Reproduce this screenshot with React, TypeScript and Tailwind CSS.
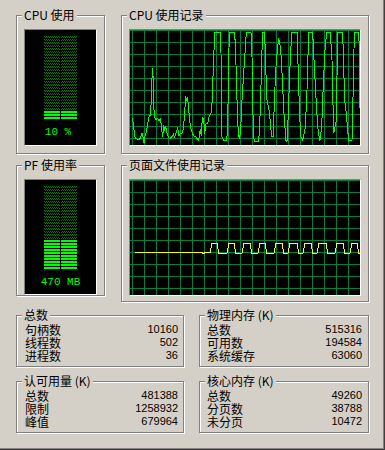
import React from 'react';

// rough trace of the cpu history, in 3x zoom coordinates of the original graph
const CPU_TRACE: [number, number][] = [
  [37, 355], [40, 372], [43, 400], [46, 415], [52, 418], [57, 420], [62, 412], [66, 400], [69, 412], [72, 428],
  [75, 408], [79, 395], [83, 372], [87, 350], [91, 345], [94, 300], [97, 205], [100, 240], [102, 330], [106, 360],
  [112, 355], [117, 362], [122, 356], [125, 390], [128, 410], [131, 375], [134, 392], [137, 378], [141, 398], [145, 412],
  [150, 416], [156, 410], [160, 402], [164, 412], [168, 398], [173, 385], [177, 408], [181, 400], [186, 400], [190, 388],
  [194, 340], [197, 288], [200, 302], [203, 292], [206, 330], [210, 370], [213, 388], [217, 400], [222, 408], [227, 410],
  [231, 415], [235, 420], [238, 410], [241, 386], [244, 408], [247, 352], [251, 355], [254, 402], [258, 372], [263, 370],
  [268, 348], [273, 340], [276, 310], [279, 230], [282, 150], [285, 97], [300, 97], [303, 160], [306, 410], [311, 420],
  [320, 420], [323, 390], [325, 240], [328, 97], [344, 97], [347, 160], [351, 300], [355, 408], [359, 415], [362, 388],
  [366, 300], [371, 220], [375, 160], [379, 97], [393, 97], [396, 170], [400, 400], [403, 425], [416, 425], [419, 380],
  [422, 290], [426, 150], [429, 97], [434, 97], [437, 200], [441, 300], [448, 335], [455, 410], [460, 410], [463, 300],
  [468, 200], [472, 150], [476, 115], [480, 135], [484, 175], [488, 260], [493, 360], [498, 422], [501, 425], [504, 360],
  [510, 200], [515, 97], [531, 97], [533, 160], [539, 350], [543, 410], [548, 420], [553, 398], [556, 380], [561, 270],
  [566, 97], [578, 97], [581, 160], [590, 330], [595, 400], [600, 422], [605, 380], [610, 250], [615, 150], [620, 97],
  [631, 97], [636, 180], [641, 400], [649, 360], [653, 97], [668, 97], [671, 200], [674, 300], [679, 340], [683, 390],
  [686, 420], [696, 420], [700, 250], [703, 97], [716, 97], [719, 175], [719, 325],
];

const cpuPoints = CPU_TRACE.map(([x, y]) => `${x / 3 - 10},${y / 3 - 30}`).join(' ');

// page file history: flat, then a trapezoid wave
const PF_TOPS: [number, number][] = [
  [82, 87], [99, 104], [114, 120], [130, 135], [146, 152], [160, 167], [175, 181], [189, 196], [207, 213], [222, 227],
];

const pfPoints = (() => {
  const pts: string[] = ['5,72.5', '72,72.5', '72,73.5', '74,73.5', '74,72.5', '79,72.5'];
  PF_TOPS.forEach(([a, b], i) => {
    const base = i === 0 ? 72.5 : 73.5;
    pts.push(`${a - 2},${base}`, `${a},63.5`, `${b},63.5`, `${b + 2},73.5`);
  });
  pts.push('230,73.5');
  return pts.join(' ');
})();

const GRID_X = Array.from({ length: 20 }, (_, i) => 2.5 + i * 12);
const GRID_Y = Array.from({ length: 10 }, (_, i) => 0.5 + i * 12);

const Group: React.FC<{ title: string; className?: string; children?: React.ReactNode }> = ({ title, className = '', children }) => (
  <div className={`flex flex-col border border-[#808080] shadow-[inset_1px_1px_0_#fff,1px_1px_0_#fff] ${className}`}>
    <span className="-mt-[7px] ml-[5px] w-fit bg-[#d4d0c8] px-[2px] text-[12px] leading-[12px] text-black">{title}</span>
    {children}
  </div>
);

const Sunken: React.FC<{ className?: string; children?: React.ReactNode }> = ({ className = '', children }) => (
  <div className={`border border-t-[#808080] border-l-[#808080] border-b-white border-r-white bg-black ${className}`}>
    {children}
  </div>
);

const Meter: React.FC<{ lit: number; id: string; label: string; labelClass?: string }> = ({ lit, id, label, labelClass = '' }) => {
  const rows = 28;
  return (
    <Sunken className="mx-[7px] mt-[8px] flex h-[117px] flex-col items-center">
      <svg width="33" height="84" className="mt-[6px]">
        <defs>
          <pattern id={id} width="2" height="3" patternUnits="userSpaceOnUse">
            <rect x="0" y="0" width="1" height="1" fill="#008000" />
            <rect x="1" y="1" width="1" height="1" fill="#008000" />
          </pattern>
        </defs>
        <rect x="0" y="0" width="16" height="84" fill={`url(#${id})`} />
        <rect x="17" y="0" width="16" height="84" fill={`url(#${id})`} />
        {Array.from({ length: lit }, (_, i) => {
          const y = (rows - 1 - i) * 3;
          return (
            <g key={i}>
              <rect x="0" y={y} width="16" height="2" fill="#00ff00" />
              <rect x="17" y={y} width="16" height="2" fill="#00ff00" />
            </g>
          );
        })}
      </svg>
      <span className={`mt-[6px] font-['Liberation_Mono',monospace] text-[11px] leading-[12px] text-[#00ff00] ${labelClass}`}>{label}</span>
    </Sunken>
  );
};

const Graph: React.FC<{ points: string; color: string; className?: string }> = ({ points, color, className = '' }) => (
  <Sunken className={`mx-[7px] h-[117px] ${className}`}>
    <svg width="230" height="115" className="block">
      {GRID_X.map((x) => (
        <line key={`x${x}`} x1={x} y1="0" x2={x} y2="115" stroke="#008040" strokeWidth="1" />
      ))}
      {GRID_Y.map((y) => (
        <line key={`y${y}`} x1="0" y1={y + 12} x2="230" y2={y + 12} stroke="#008040" strokeWidth="1" />
      ))}
      <line x1="0" y1="0.5" x2="230" y2="0.5" stroke="#008040" strokeWidth="1" />
      <polyline points={points} fill="none" stroke={color} strokeWidth="1" shapeRendering="crispEdges" />
    </svg>
  </Sunken>
);

const Stats: React.FC<{ title: string; rows: [string, string][]; className?: string; padClass: string }> = ({ title, rows, className = '', padClass }) => (
  <Group title={title} className={`h-[52px] ${className}`}>
    <div className={`mt-[2px] flex flex-col ${padClass}`}>
      {rows.map(([label, value]) => (
        <div key={label} className="flex h-[13px] items-center justify-between">
          <span className="text-[12px] leading-[13px]">{label}</span>
          <span className="font-['Liberation_Sans',Arial,sans-serif] text-[11px] leading-[13px]">{value}</span>
        </div>
      ))}
    </div>
  </Group>
);

export default function App() {
  return (
    <div className="h-[450px] w-[385px] overflow-hidden bg-[#d4d0c8] pl-[16px] pt-[15px] font-['Noto_Sans_CJK_SC',sans-serif] text-black shadow-[inset_-1px_-1px_0_#404040,inset_-2px_-2px_0_#808080]">
      {/* graphs */}
      <div className="flex gap-[16px]">
        <Group title="CPU 使用" className="h-[139px] w-[89px]">
          <Meter lit={3} id="cpuDim" label="10 %" labelClass="pr-[5px]" />
        </Group>
        <Group title="CPU 使用记录" className="h-[139px] w-[248px]">
          <Graph points={cpuPoints} color="#00ff00" className="mt-[8px]" />
        </Group>
      </div>

      <div className="mt-[11px] flex items-start gap-[16px]">
        <Group title="PF 使用率" className="h-[131px] w-[89px]">
          <Meter lit={10} id="pfDim" label="470 MB" />
        </Group>
        <Group title="页面文件使用记录" className="h-[137px] w-[248px]">
          <Graph points={pfPoints} color="#ffff00" className="mt-[8px]" />
        </Group>
      </div>

      {/* totals */}
      <div className="mt-[13px] flex gap-[15px]">
        <Stats
          title="总数"
          className="w-[168px]"
          padClass="pl-[8px] pr-[5px]"
          rows={[['句柄数', '10160'], ['线程数', '502'], ['进程数', '36']]}
        />
        <Stats
          title="物理内存 (K)"
          className="w-[170px]"
          padClass="pl-[7px] pr-[6px]"
          rows={[['总数', '515316'], ['可用数', '194584'], ['系统缓存', '63060']]}
        />
      </div>

      <div className="mt-[14px] flex gap-[15px]">
        <Stats
          title="认可用量 (K)"
          className="w-[168px]"
          padClass="pl-[8px] pr-[5px]"
          rows={[['总数', '481388'], ['限制', '1258932'], ['峰值', '679964']]}
        />
        <Stats
          title="核心内存 (K)"
          className="w-[170px]"
          padClass="pl-[7px] pr-[6px]"
          rows={[['总数', '49260'], ['分页数', '38788'], ['未分页', '10472']]}
        />
      </div>
    </div>
  );
}
